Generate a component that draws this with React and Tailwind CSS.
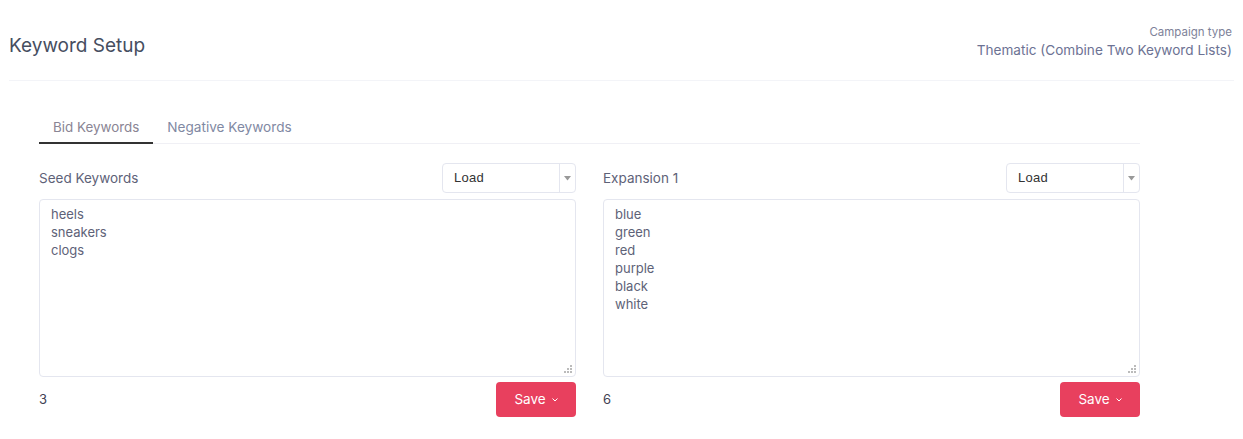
import React from 'react';

const font = { fontFamily: '"Inter", "Noto Sans", sans-serif' };

const LoadSelect = () => {
    return (
        <div className="flex h-[30px] w-[134px] items-stretch rounded-[4px] border border-[#e4e6ef] bg-white">
            <div className="flex flex-1 items-center pl-[11px] font-['Liberation_Sans',Arial,sans-serif] text-[13px] tracking-[0.3px] text-[#333]">
                Load
            </div>
            <div className="flex w-[16px] items-center justify-center border-l border-[#e4e6ef]">
                <svg width="7" height="5" viewBox="0 0 7 5">
                    <path d="M0 0 L7 0 L3.5 4.5 Z" fill="#999" />
                </svg>
            </div>
        </div>
    );
};

const KeywordColumn = ({ label, words }) => {
    return (
        <div className="flex flex-col">
            <div className="flex h-[30px] items-center justify-between">
                <div className="text-[13.5px] text-[#5e6278]">{label}</div>
                <LoadSelect />
            </div>
            <div className="relative mt-[6px]">
                <textarea
                    readOnly
                    defaultValue={words.join('\n')}
                    style={font}
                    className="block h-[178px] w-full resize-none rounded-[4px] border border-[#e4e6ef] px-[11px] pt-[5px] text-[13px] leading-[18px] text-[#5e6278] outline-none"
                />
                <svg className="absolute right-[4px] bottom-[4px]" width="8" height="8" viewBox="0 0 8 8">
                    <rect x="6" y="0" width="2" height="2" fill="#bbb" />
                    <rect x="3" y="3" width="2" height="2" fill="#bbb" />
                    <rect x="6" y="3" width="2" height="2" fill="#bbb" />
                    <rect x="0" y="6" width="2" height="2" fill="#bbb" />
                    <rect x="3" y="6" width="2" height="2" fill="#bbb" />
                    <rect x="6" y="6" width="2" height="2" fill="#bbb" />
                </svg>
            </div>
            <div className="mt-[5px] flex items-center justify-between">
                <div className="text-[13px] text-[#3f4254]">{words.length}</div>
                <button className="flex h-[35px] w-[80px] items-center justify-center gap-[6px] rounded-[4px] bg-[#e8405e] text-[13.5px] text-white">
                    Save
                    <svg width="6" height="4" viewBox="0 0 6 4">
                        <path d="M0.5 0.5 L3 3 L5.5 0.5" stroke="#fff" strokeWidth="1" fill="none" />
                    </svg>
                </button>
            </div>
        </div>
    );
};

const App = () => {
    return (
        <div style={font} className="min-h-[439px] w-full bg-white">
            <div className="mx-[9px] flex h-[81px] justify-between border-b border-[#f3f4f8]">
                <div className="pt-[34px] text-[19px] leading-[24px] text-[#464e5f]">
                    Keyword Setup
                </div>
                <div className="flex flex-col items-end pt-[24px] pr-[2px]">
                    <div className="text-[11.5px] leading-[16px] text-[#7e8299]">Campaign type</div>
                    <div className="text-[13.6px] leading-[20px] text-[#6c7293]">
                        Thematic (Combine Two Keyword Lists)
                    </div>
                </div>
            </div>

            <div className="ml-[39px] w-[1101px]">
                <div className="mt-[26px] flex border-b border-[#f0f0f5]">
                    <div className="-mb-px border-b-2 border-[#333] px-[14px] pt-[10px] pb-[5px] text-[13.4px] leading-[20px] text-[#8a8594]">
                        Bid Keywords
                    </div>
                    <div className="px-[14px] pt-[10px] pb-[5px] text-[13.6px] leading-[20px] text-[#8189a3]">
                        Negative Keywords
                    </div>
                </div>

                <div className="mt-[19px] grid grid-cols-2 gap-[27px]">
                    <KeywordColumn label="Seed Keywords" words={['heels', 'sneakers', 'clogs']} />
                    <KeywordColumn
                        label="Expansion 1"
                        words={['blue', 'green', 'red', 'purple', 'black', 'white']}
                    />
                </div>
            </div>
        </div>
    );
};

export default App;
